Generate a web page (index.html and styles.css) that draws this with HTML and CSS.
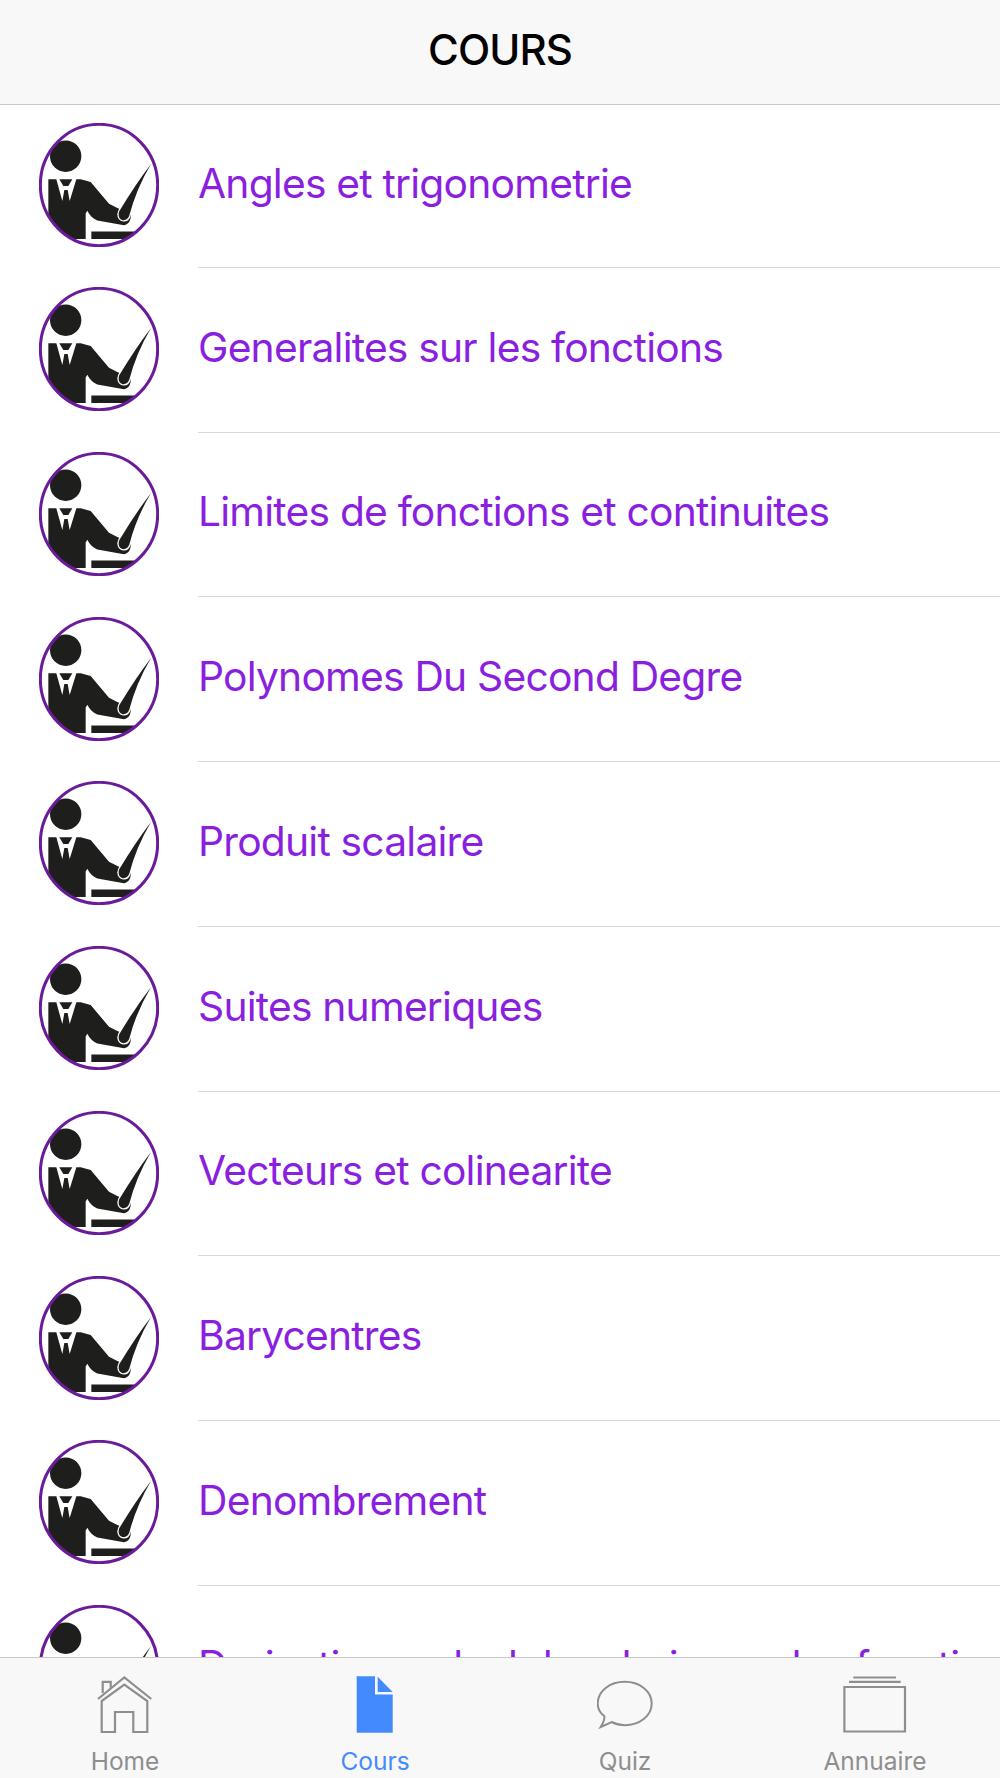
FILE: index.html
```html
<!DOCTYPE html>
<html lang="fr">
<head>
    <meta charset="UTF-8">
    <meta name="viewport" content="width=device-width, initial-scale=1.0">
    <title>Cours</title>
    <link rel="stylesheet" href="styles.css">
</head>
<body>

    <svg class="defs" width="0" height="0" aria-hidden="true">
        <symbol id="prof" viewBox="117 70 360 370" preserveAspectRatio="none">
            <clipPath id="prof-clip"><ellipse cx="297" cy="255" rx="176" ry="181"/></clipPath>
            <g clip-path="url(#prof-clip)" fill="#1e1e1c">
                <circle cx="197" cy="169" r="47"/>
                <path d="M145 238H169L187 303L193 270H203L209 303L229 238H242L272 246L327 311L352 324L392 340C394 358 388 372 372 375L292 361C278 355 268 345 262 332L257 340V416H145Z"/>
                <path d="M178 238H217L205 258H190Z"/>
                <path d="M274 394H420V416H274Z"/>
                <path class="pointer" d="M453 192Q408 268 388 346C382 366 355 364 356 342C356 336 358 332 361 328Q405 255 453 192Z"/>
            </g>
            <ellipse cx="297" cy="255" rx="176" ry="181" fill="none" stroke="#6a1b9a" stroke-width="9"/>
        </symbol>
    </svg>

    <header class="top-bar">COURS</header>

    <main class="list">
        <a class="row"><svg class="avatar"><use href="#prof"/></svg><div class="row-text"><span>Angles et trigonometrie</span></div></a>
        <a class="row"><svg class="avatar"><use href="#prof"/></svg><div class="row-text"><span>Generalites sur les fonctions</span></div></a>
        <a class="row"><svg class="avatar"><use href="#prof"/></svg><div class="row-text"><span>Limites de fonctions et continuites</span></div></a>
        <a class="row"><svg class="avatar"><use href="#prof"/></svg><div class="row-text"><span>Polynomes Du Second Degre</span></div></a>
        <a class="row"><svg class="avatar"><use href="#prof"/></svg><div class="row-text"><span>Produit scalaire</span></div></a>
        <a class="row"><svg class="avatar"><use href="#prof"/></svg><div class="row-text"><span>Suites numeriques</span></div></a>
        <a class="row"><svg class="avatar"><use href="#prof"/></svg><div class="row-text"><span>Vecteurs et colinearite</span></div></a>
        <a class="row"><svg class="avatar"><use href="#prof"/></svg><div class="row-text"><span>Barycentres</span></div></a>
        <a class="row"><svg class="avatar"><use href="#prof"/></svg><div class="row-text"><span>Denombrement</span></div></a>
        <a class="row"><svg class="avatar"><use href="#prof"/></svg><div class="row-text"><span>Derivation, calcul des derivees des fonctions</span></div></a>
    </main>

    <nav class="tabs">
        <a class="tab">
            <svg class="tab-icon" viewBox="0 0 56 58" fill="none" stroke="currentColor" stroke-width="2.2">
                <path d="M1 23L27.300 1.500L54.300 23"/>
                <path d="M4.700 25L27.300 8.500L50.300 25V56H36.300V36H18V56H4.700Z"/>
                <path d="M5.700 17V5.800H13.700V11.800"/>
            </svg>
            <span>Home</span>
        </a>
        <a class="tab active">
            <svg class="tab-icon" viewBox="0 0 56 58" fill="currentColor">
                <path d="M9.700 0.200H28V18.500H45.700V56.800H9.700Z"/>
                <path d="M30.700 0.800L45.700 16H30.700Z"/>
            </svg>
            <span>Cours</span>
        </a>
        <a class="tab">
            <svg class="tab-icon" viewBox="0 0 56 58" fill="none" stroke="currentColor" stroke-width="2">
                <path d="M3.700 51C6 47 8 44 7.300 40C3 37 0.700 33 0.700 27.500C0.700 15 13 5.800 27.700 5.800C42.500 5.800 54.700 15 54.700 27.500C54.700 40 42.500 49.200 27.700 49.200C23 49.200 18.500 48 14.700 46Z"/>
            </svg>
            <span>Quiz</span>
        </a>
        <a class="tab">
            <svg class="tab-icon wide" viewBox="0 0 66 58" fill="none" stroke="currentColor" stroke-width="2.200">
                <path d="M2.400 11H63V55.500H2.400Z"/>
                <path d="M7 5.800H58.700"/>
                <path d="M11.300 1.500H54"/>
            </svg>
            <span>Annuaire</span>
        </a>
    </nav>

</body>
</html>
```

FILE: styles.css
```css
html, body {
    height: 100%;
}

body {
    margin: 0;
    display: flex;
    flex-direction: column;
    background-color: #fff;
    font-family: Inter, "Liberation Sans", sans-serif;
    overflow: hidden;
}

.defs {
    position: absolute;
}

.top-bar {
    height: 105px;
    flex-shrink: 0;
    display: flex;
    align-items: center;
    justify-content: center;
    padding-bottom: 5px;
    box-sizing: border-box;
    background-color: #f8f8f8;
    border-bottom: 1.5px solid #c8c8c8;
    color: #000;
    font-size: 42px;
    font-weight: 500;
    letter-spacing: -0.9px;
}

.list {
    flex: 1;
    min-height: 0;
    overflow: hidden;
}

.row {
    display: flex;
    align-items: center;
    height: 164.750px;
    box-sizing: border-box;
    padding-left: 39px;
}

.row:first-child {
    height: 162.750px;
}

.avatar {
    width: 120px;
    height: 124px;
    flex-shrink: 0;
    margin-right: 39px;
    margin-bottom: 2px;
}

.pointer {
    stroke: #fff;
    stroke-width: 8px;
    paint-order: stroke;
}

.row-text {
    flex: 1;
    min-width: 0;
    display: flex;
    align-items: center;
    align-self: stretch;
    padding-bottom: 6px;
    padding-right: 35px;
    color: #8a1fe0;
    font-size: 40.800px;
    letter-spacing: -0.8px;
    border-bottom: 1.5px solid #d8d8d8;
}

.row-text span {
    min-width: 0;
    overflow: hidden;
    white-space: nowrap;
}

.tabs {
    height: 121px;
    flex-shrink: 0;
    display: grid;
    grid-template-columns: repeat(4, 1fr);
    background-color: #f8f8f8;
    border-top: 1.5px solid #c8c8c8;
    box-sizing: border-box;
}

.tab {
    display: flex;
    flex-direction: column;
    align-items: center;
    padding-top: 18px;
    color: #8e8e8e;
    font-size: 24.500px;
}

.tab span {
    margin-top: 12px;
}

.tab.active {
    color: #448aff;
}

.tab-icon {
    width: 56px;
    height: 58px;
}

.tab-icon.wide {
    width: 66px;
}
```
